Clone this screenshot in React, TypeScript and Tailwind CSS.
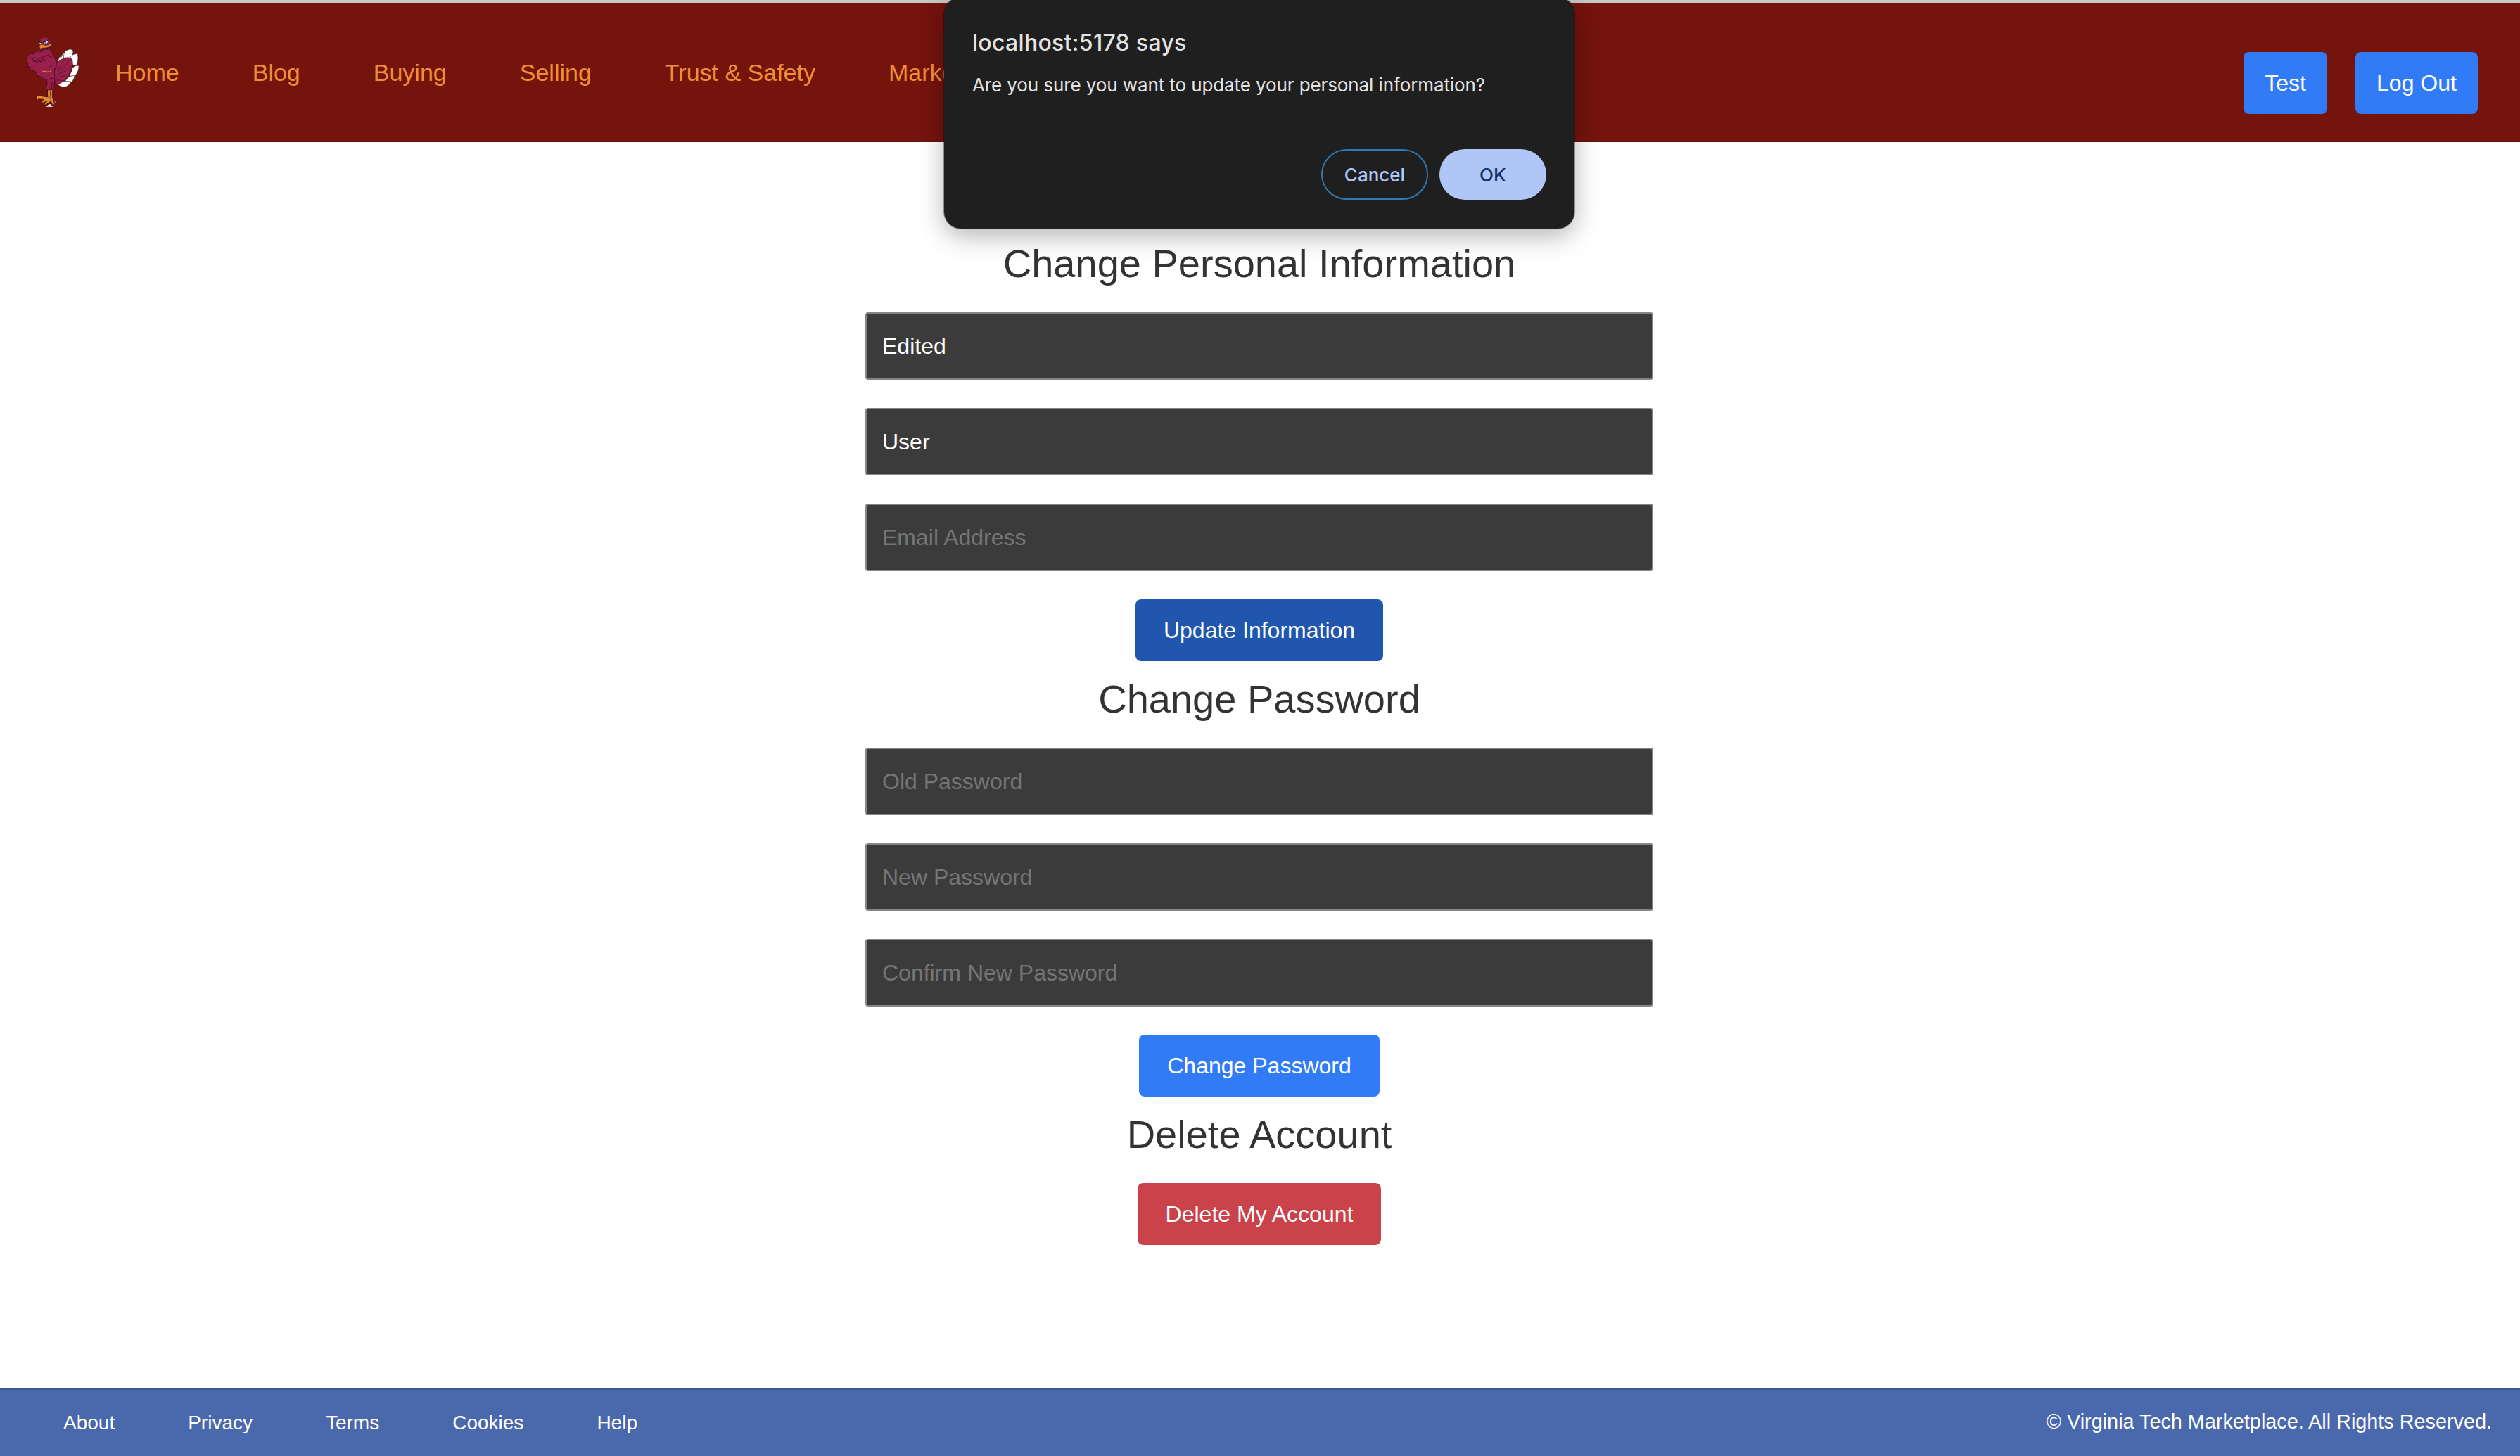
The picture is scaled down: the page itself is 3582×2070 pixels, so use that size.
import React from "react";

const navLinks = ["Home", "Blog", "Buying", "Selling", "Trust & Safety", "Marke"];
const footerLinks = ["About", "Privacy", "Terms", "Cookies", "Help"];

function BirdLogo() {
  return (
    <svg viewBox="0 0 330 390" className="mt-[3px] h-[130px] w-[110px] shrink-0" strokeLinejoin="round" strokeLinecap="round">
      {/* tail feathers */}
      <g fill="#ffffff" stroke="#3a2226" strokeWidth="2">
        <path d="M186 158 Q186 132 199 123 Q206 132 204 146 Z" />
        <path d="M200 142 Q198 116 214 108 Q224 122 218 138 Z" />
        <path d="M212 134 Q208 104 226 97 Q244 88 252 99 Q254 118 236 138 Z" />
        <path d="M236 134 Q244 112 271 112 Q277 134 267 160 Q256 166 246 156 Z" />
        <path d="M246 186 Q246 162 276 162 Q278 188 258 208 Q246 212 236 206 Z" />
        <path d="M220 226 Q232 204 258 206 Q256 224 244 234 Q230 240 216 238 Z" />
        <path d="M184 240 Q206 226 243 231 Q236 250 214 255 Q194 254 184 240 Z" />
      </g>
      <path
        d="M178 156 Q192 140 216 130 Q238 124 247 137 Q254 156 244 182 Q232 208 214 227 Q200 238 186 243 Q170 230 168 200 Z"
        fill="#98204b"
        stroke="#4a0f26"
        strokeWidth="2"
      />
      <path
        d="M188 190 Q196 158 218 132 M194 194 Q216 166 240 136 M184 202 Q220 190 246 164 M180 214 Q206 206 232 202 M178 224 Q194 226 210 226 M176 180 Q184 172 190 160"
        fill="none"
        stroke="#4a0f26"
        strokeWidth="2"
      />
      {/* legs and feet */}
      <path d="M144 264 L154 264 L156 296 L160 310 L152 314 L144 306 Z" fill="#e8832c" stroke="#2a1518" strokeWidth="2" />
      <path d="M158 264 L164 264 L163 296 L172 326 L167 336 L160 322 L154 306 Z" fill="#e8832c" stroke="#2a1518" strokeWidth="2" />
      <path d="M155 268 L158 284 L154 300" fill="none" stroke="#777078" strokeWidth="4" />
      <path
        d="M146 297 L122 294 L112 291 L98 293 L96 302 L97 313 L104 305 L128 307 L117 316 L116 323 L142 314 L130 325 L130 332 L150 323 L158 308 Z"
        fill="#ee882e"
        stroke="#2a1518"
        strokeWidth="2"
      />
      <path d="M134 338 L150 328 L157 328 L165 338 Z" fill="#ffffff" />
      <path d="M132 332 L152 320 M153 318 L160 332" fill="none" stroke="#1c1414" strokeWidth="3" />
      <circle cx="176" cy="317" r="4.500" fill="#7b6a6c" />
      {/* body and crossed arms */}
      <path
        d="M107 94 L120 97 L152 88 Q156 106 166 116 Q176 130 178 144 L182 158 Q178 176 170 190 Q177 206 173 220 Q170 240 171 260 Q160 270 142 266 L137 258 Q144 240 140 226 L118 218 L98 204 L95 190 Q72 184 58 168 L60 156 L54 138 Q56 118 68 112 L82 114 Q92 104 104 100 Z"
        fill="#98204b"
        stroke="#3a0b1e"
        strokeWidth="2"
      />
      <path
        d="M66 122 L72 132 L80 134 L84 146 Q100 132 124 126 L150 116 M84 146 L92 142 L96 150 L108 138 L112 148 L122 134 L128 144 L138 132 M78 132 L90 128 M58 166 L76 172 M150 168 L164 160 M168 184 L178 172 M100 206 L126 216 M140 222 L166 216 M148 240 L150 260 M162 236 L160 262 M150 122 L164 130 M106 106 L128 100"
        fill="none"
        stroke="#3a0b1e"
        strokeWidth="2.500"
      />
      <path d="M122 187 L140 190 L158 187" fill="none" stroke="#8a4a1e" strokeWidth="6" strokeLinecap="butt" />
      <path d="M122 187 L140 190 L158 187" fill="none" stroke="#dba035" strokeWidth="4" strokeDasharray="5 3" strokeLinecap="butt" />
      {/* head */}
      <path d="M108 78 Q100 44 130 41 Q158 42 156 70 L156 82 L152 92 L118 97 Z" fill="#98204b" stroke="#3a0b1e" strokeWidth="2" />
      <path d="M125 66 L134 60 L145 57 L144 67 L134 70 Z M108 66 L115 62 L117 68 L110 72 Z" fill="#e3e8ea" stroke="#1d2226" strokeWidth="2" />
      <circle cx="135" cy="65" r="2.500" fill="#1d2226" />
      <path d="M106 61 L118 66 M124 65 L145 54" fill="none" stroke="#241016" strokeWidth="3" />
      <path d="M108 80 Q112 70 122 73 L132 78 L148 74 L158 69 L158 78 L150 84 L130 87 L118 87 L115 94 L111 88 Z" fill="#ee882e" stroke="#5a2a10" strokeWidth="1.500" />
      <path d="M120 89 L134 91 L152 84" fill="none" stroke="#241016" strokeWidth="3" />
    </svg>
  );
}

function Field({ value, placeholder }: { value?: string; placeholder?: string }) {
  return (
    <input
      className="block h-24 w-full rounded-[4px] border-2 border-[#858585] bg-[#3b3b3b] px-[22px] text-[32px] text-white placeholder:text-[#757575] placeholder:opacity-100"
      defaultValue={value}
      placeholder={placeholder}
    />
  );
}

function SectionTitle({ children }: { children: React.ReactNode }) {
  return <h2 className="mb-9 mt-5 text-center text-[56px] leading-[67px] text-[#333333]">{children}</h2>;
}

function ConfirmDialog() {
  return (
    <div
      role="dialog"
      className="absolute left-[1342px] top-[-4px] h-[329px] w-[896px] rounded-3xl bg-[#1f1f1f] px-10 font-['Inter',sans-serif] text-[#e3e3e3] shadow-[0_0_0_1px_rgba(0,0,0,0.35),0_10px_36px_rgba(0,0,0,0.3)]"
    >
      <div className="mt-[45px] text-[32px] font-medium leading-10 tracking-[0.3px] whitespace-nowrap">localhost:5178 says</div>
      <div className="mt-5 text-[26px] leading-10 tracking-[-0.1px] whitespace-nowrap">Are you sure you want to update your personal information?</div>
      <div className="mt-[71px] flex justify-end gap-4 text-[26px] font-medium">
        <button className="h-[72px] w-[152px] rounded-full border-2 border-[#2f7ab3] text-[#afc6f6]">Cancel</button>
        <button className="h-[72px] w-[152px] rounded-full bg-[#afc6f6] text-[#12306b]">OK</button>
      </div>
    </div>
  );
}

export default function App() {
  return (
    <div className="relative flex h-[2070px] w-[3582px] flex-col overflow-hidden bg-white font-['Liberation_Sans',Arial,sans-serif]">
      <div className="h-1 shrink-0 bg-[#c8c8c8]" />
      <header className="flex h-[198px] shrink-0 items-center border-b border-[#640f0a] bg-[#75130d] pl-5 pr-[60px]">
        <BirdLogo />
        <nav className="ml-[34px] mt-[2px] flex gap-[104px] text-[34px] text-[#ed8f35]">
          {navLinks.map((l) => (
            <a key={l} className="whitespace-nowrap">{l}</a>
          ))}
        </nav>
        <div className="ml-auto mt-[30px] flex gap-10 text-[32px] text-white">
          <button className="h-[88px] w-[119px] rounded-lg bg-[#317bf6]">Test</button>
          <button className="h-[88px] w-[174px] rounded-lg bg-[#317bf6]">Log Out</button>
        </div>
      </header>

      <main className="ml-[1230px] flex w-[1120px] flex-1 flex-col items-center pt-[119px] text-[32px] text-white">
        <SectionTitle>Change Personal Information</SectionTitle>
        <div className="mb-10 flex w-full flex-col gap-10">
          <Field value="Edited" />
          <Field value="User" />
          <Field placeholder="Email Address" />
        </div>
        <button className="h-[88px] w-[352px] shrink-0 rounded-lg bg-[#2056ad]">Update Information</button>

        <SectionTitle>Change Password</SectionTitle>
        <div className="mb-10 flex w-full flex-col gap-10">
          <Field placeholder="Old Password" />
          <Field placeholder="New Password" />
          <Field placeholder="Confirm New Password" />
        </div>
        <button className="h-[88px] w-[342px] shrink-0 rounded-lg bg-[#317bf6]">Change Password</button>

        <SectionTitle>Delete Account</SectionTitle>
        <button className="h-[88px] w-[346px] shrink-0 rounded-lg bg-[#ca434b]">Delete My Account</button>
      </main>

      <footer className="flex h-24 shrink-0 items-center justify-between border-t-2 border-[#3b5998] bg-[#4a69ad] pl-[90px] pr-10 text-[28px] text-white">
        <div className="flex gap-[104px]">
          {footerLinks.map((l) => (
            <a key={l}>{l}</a>
          ))}
        </div>
        <p className="mb-[3px] text-[28.8px]">© Virginia Tech Marketplace. All Rights Reserved.</p>
      </footer>

      <ConfirmDialog />
    </div>
  );
}
